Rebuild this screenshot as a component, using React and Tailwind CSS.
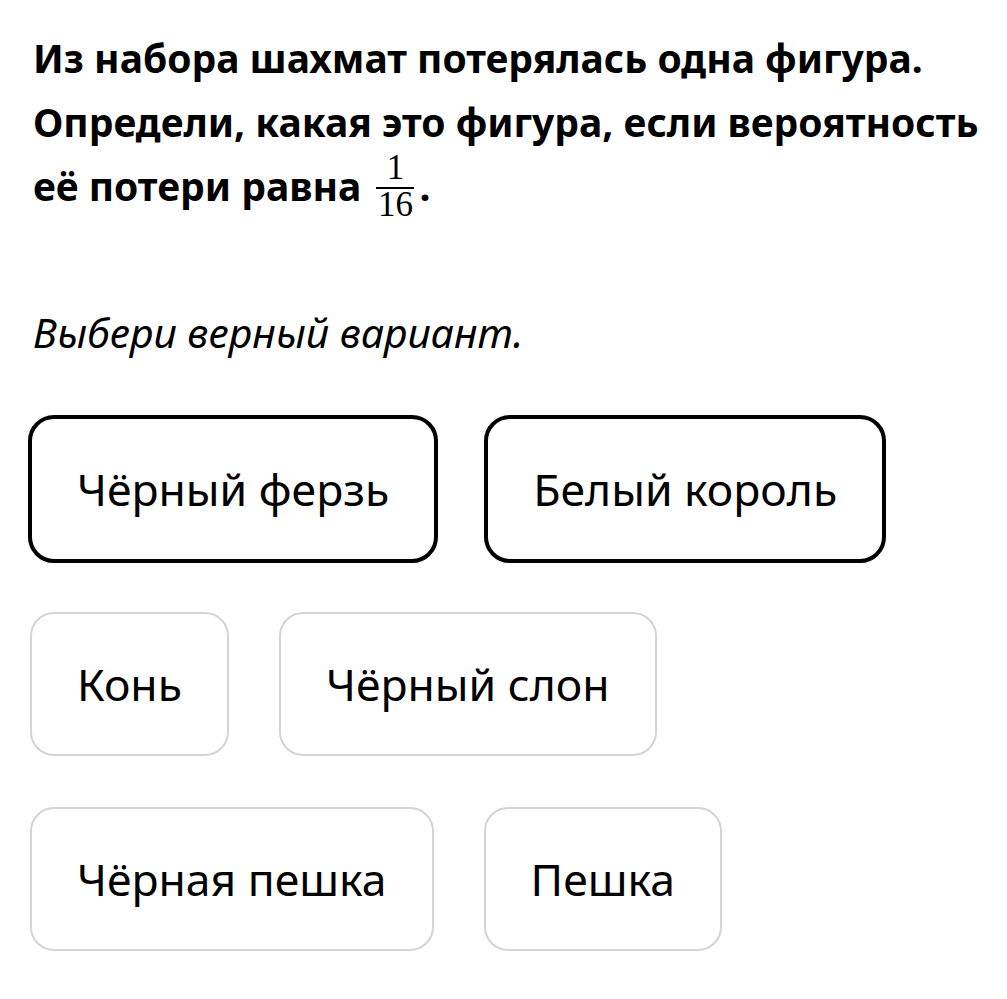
export default function App() {
  const Opt = ({ children, selected }) => (
    <div
      className={
        selected
          ? "h-[148px] -my-[2px] -mx-[2px] px-[45px] border-[4px] border-black rounded-[26px] flex items-center justify-center"
          : "h-[144px] px-[45px] border-2 border-[#d4d4d4] rounded-[24px] flex items-center justify-center"
      }
    >
      <span className="text-[44.5px] leading-none text-black whitespace-nowrap">{children}</span>
    </div>
  );
  return (
    <div className="bg-white min-h-[999px] w-[1007px] px-[33px] pt-[26px] text-black" style={{ fontFamily: '"Noto Sans", "Open Sans", sans-serif' }}>
      <div className="text-[39px] font-bold leading-[64px]">
        <div className="whitespace-nowrap">Из набора шахмат потерялась одна фигура.</div>
        <div className="whitespace-nowrap">Определи, какая это фигура, если вероятность</div>
        <div className="whitespace-nowrap">
          её потери равна{" "}
          <span className="inline-flex flex-col items-center align-[22px] ml-[5px] font-normal" style={{ fontFamily: '"Liberation Serif", serif' }}>
            <span className="text-[35px] leading-[26px] mb-[6px]">1</span>
            <span className="h-[2px] w-[38px] bg-black"></span>
            <span className="text-[35px] leading-[26px] mt-[3px]">16</span>
          </span>
          <span className="ml-[5px]">.</span>
        </div>
      </div>
      <div className="mt-[88px] text-[41px] italic leading-[52px]">Выбери верный вариант.</div>
      <div className="mt-[59px] -ml-[3px] flex flex-col gap-y-[51px]">
        <div className="flex gap-x-[50px]">
          <Opt selected>Чёрный ферзь</Opt>
          <Opt selected>Белый король</Opt>
        </div>
        <div className="flex gap-x-[50px]">
          <Opt>Конь</Opt>
          <Opt>Чёрный слон</Opt>
        </div>
        <div className="flex gap-x-[50px]">
          <Opt>Чёрная пешка</Opt>
          <Opt>Пешка</Opt>
        </div>
      </div>
    </div>
  );
}
